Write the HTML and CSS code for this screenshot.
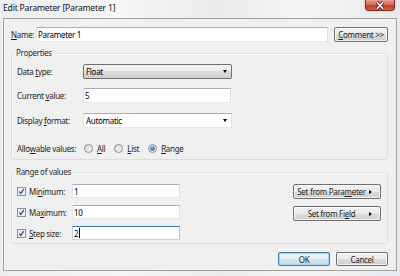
FILE: index.html
```html
<!DOCTYPE html>
<html>
<head>
<meta charset="utf-8">
<title>Edit Parameter</title>
<link rel="stylesheet" href="styles.css">
</head>
<body>
<div class="window">
  <div class="titlebar">
    <span class="title">Edit Parameter [Parameter 1]</span>
    <div class="close">
      <svg width="12" height="9" viewBox="0 0 12 9"><path d="M3 1.2 L9 7.8 M9 1.2 L3 7.8" stroke="#5a1a14" stroke-width="3.2"/><path d="M3 1.2 L9 7.8 M9 1.2 L3 7.8" stroke="#ffffff" stroke-width="1.7"/></svg>
    </div>
  </div>
  <div class="client">
    <div class="name-row">
      <span class="name-label"><u>N</u>ame:</span>
      <div class="textbox name-box">Parameter 1</div>
      <button class="btn comment-btn"><u>C</u>omment &gt;&gt;</button>
    </div>

    <fieldset class="group props">
      <legend>Properties</legend>
      <div class="row">
        <span class="lbl">Data <u>t</u>ype:</span>
        <div class="combo combo-list">Float<span class="down"></span></div>
      </div>
      <div class="row row-cur">
        <span class="lbl">Current <u>v</u>alue:</span>
        <div class="textbox cur-box">5</div>
      </div>
      <div class="row row-fmt">
        <span class="lbl">Display <u>f</u>ormat:</span>
        <div class="combo combo-edit">Automatic<span class="down"></span></div>
      </div>
      <div class="row row-radio">
        <span class="lbl">Allo<u>w</u>able values:</span>
        <div class="radios">
          <span class="radio-item"><svg class="radio" width="9" height="9" viewBox="0 0 9 9"><defs><linearGradient id="rg" x1="0" y1="0" x2="1" y2="1"><stop offset="0" stop-color="#d6d6d6"/><stop offset="1" stop-color="#fbfbfb"/></linearGradient></defs><circle cx="4.5" cy="4.5" r="4" fill="url(#rg)" stroke="#8e8f8f" stroke-width="1"/></svg><span><u>A</u>ll</span></span>
          <span class="radio-item"><svg class="radio" width="9" height="9" viewBox="0 0 9 9"><circle cx="4.5" cy="4.5" r="4" fill="url(#rg)" stroke="#8e8f8f" stroke-width="1"/></svg><span><u>L</u>ist</span></span>
          <span class="radio-item"><svg class="radio" width="9" height="9" viewBox="0 0 9 9"><defs><radialGradient id="dot" cx="0.4" cy="0.35" r="0.7"><stop offset="0" stop-color="#8ad0f7"/><stop offset="0.6" stop-color="#2a77b8"/><stop offset="1" stop-color="#174e86"/></radialGradient></defs><circle cx="4.5" cy="4.5" r="4" fill="url(#rg)" stroke="#8e8f8f" stroke-width="1"/><circle cx="4.5" cy="4.5" r="2.3" fill="url(#dot)"/></svg><span><u>R</u>ange</span></span>
        </div>
      </div>
    </fieldset>

    <fieldset class="group range">
      <legend>Range of values</legend>
      <div class="range-body">
        <div class="range-left">
          <div class="crow">
            <span class="chk-lbl"><svg class="chk" width="9" height="9" viewBox="0 0 9 9"><rect x="0.5" y="0.5" width="8" height="8" fill="#f4f4f4" stroke="#8e8f8f"/><rect x="1.5" y="1.5" width="6" height="6" fill="#e9eef3"/><path d="M2.3 4.6 L3.8 6.4 L6.8 2.1" fill="none" stroke="#2c4a8c" stroke-width="1.2"/></svg>Mi<u>n</u>imum:</span>
            <div class="textbox num-box">1</div>
          </div>
          <div class="crow">
            <span class="chk-lbl"><svg class="chk" width="9" height="9" viewBox="0 0 9 9"><rect x="0.5" y="0.5" width="8" height="8" fill="#f4f4f4" stroke="#8e8f8f"/><rect x="1.5" y="1.5" width="6" height="6" fill="#e9eef3"/><path d="M2.3 4.6 L3.8 6.4 L6.8 2.1" fill="none" stroke="#2c4a8c" stroke-width="1.2"/></svg>Ma<u>x</u>imum:</span>
            <div class="textbox num-box">10</div>
          </div>
          <div class="crow">
            <span class="chk-lbl"><svg class="chk" width="9" height="9" viewBox="0 0 9 9"><rect x="0.5" y="0.5" width="8" height="8" fill="#f4f4f4" stroke="#8e8f8f"/><rect x="1.5" y="1.5" width="6" height="6" fill="#e9eef3"/><path d="M2.3 4.6 L3.8 6.4 L6.8 2.1" fill="none" stroke="#2c4a8c" stroke-width="1.2"/></svg><u>S</u>tep size:</span>
            <div class="textbox num-box focus">2<span class="caret"></span></div>
          </div>
        </div>
        <div class="range-right">
          <button class="btn set-btn"><span class="set-text">Set from Para<u>m</u>eter</span><span class="right-arrow"></span></button>
          <button class="btn set-btn"><span class="set-text">Set from Fi<u>e</u>ld</span><span class="right-arrow"></span></button>
        </div>
      </div>
    </fieldset>

    <div class="footer">
      <button class="btn ok-btn">OK</button>
      <button class="btn cancel-btn">Cancel</button>
    </div>
  </div>
</div>
</body>
</html>
```

FILE: styles.css
```css
* { box-sizing: border-box; }
html, body { margin: 0; padding: 0; }
body {
  width: 400px;
  height: 276px;
  overflow: hidden;
  font-family: "Noto Sans", "Open Sans", sans-serif;
  font-size: 8px;
  letter-spacing: -0.3px;
  white-space: nowrap;
  color: #1e1e1e;
  background: #e6e9ec;
}
u { text-decoration: underline; text-underline-offset: 1px; }

.window {
  width: 400px;
  height: 276px;
  display: flex;
  flex-direction: column;
  background: linear-gradient(to right, #eceeef 0%, #f6f6f7 30%, #e9ebec 55%, #f4f5f6 75%, #e7eaec 100%);
}
.titlebar {
  height: 18px;
  flex: none;
  display: flex;
  justify-content: space-between;
  align-items: flex-start;
}
.title {
  font-size: 8.6px;
  letter-spacing: -0.2px;
  line-height: 17px;
  padding-left: 3px;
  color: #111;
}
.close {
  width: 30px;
  height: 11px;
  margin-right: 5px;
  border: 1px solid #7c2f28;
  border-top: none;
  border-radius: 0 0 4px 4px;
  background: linear-gradient(#e9a092 0%, #d4685a 45%, #c2402f 55%, #d45c44 100%);
  box-shadow: 0 0 3px rgba(200, 80, 60, 0.4);
  display: flex;
  align-items: center;
  justify-content: center;
}

.client {
  margin: 0 3px;
  height: 253px;
  border: 1px solid #9ea3a8;
  background: #f0f0f0;
  padding: 8px 8px 0 7px;
  display: flex;
  flex-direction: column;
}

.name-row {
  display: flex;
  align-items: center;
  height: 15px;
}
.name-label { width: 25px; flex: none; }

.textbox {
  background: #fff;
  border: 1px solid;
  border-color: #abadb3 #dbdfe6 #e3e9ef #e2e3ea;
  height: 15px;
  padding-left: 1px;
  line-height: 13px;
  color: #000;
  display: flex;
  align-items: center;
  flex: none;
}
.name-box { width: 292px; }
.cur-box { width: 148px; }
.num-box { width: 108px; height: 14px; }
.num-box.focus { border-color: #3d7bad #a4c9e3 #b7d9ed #b5cfe7; }
.caret { width: 1px; height: 10px; background: #000; margin-left: 0.5px; }

.btn {
  font-family: inherit;
  font-size: 8px;
  letter-spacing: -0.3px;
  white-space: nowrap;
  color: #1e1e1e;
  height: 15px;
  padding: 0;
  border: 1px solid #707070;
  border-radius: 2px;
  background: linear-gradient(#f2f2f2 0%, #ebebeb 50%, #dddddd 50%, #cfcfcf 100%);
  box-shadow: inset 0 0 0 1px rgba(255,255,255,0.7);
  line-height: 13px;
  flex: none;
}
.comment-btn { width: 54px; margin-left: 6px; }

.group {
  margin: 0;
  border: 1px solid #d5dfe5;
  border-radius: 3px;
  min-width: 0;
  box-shadow: inset 1px 1px 0 #fafbfc;
}
.group legend {
  padding: 0 2px;
  margin-left: -3px;
  line-height: 12px;
  color: #2a2a2a;
}
.props {
  margin-top: 5px;
  padding: 5px 5px 3px 5px;
}
.row {
  display: flex;
  align-items: center;
  height: 15px;
}
.row-cur { margin-top: 9px; }
.row-fmt { margin-top: 10px; }
.row-radio { margin-top: 13px; }
.lbl { width: 66px; flex: none; }

.combo {
  width: 149px;
  height: 15px;
  border: 1px solid #707070;
  border-radius: 2px;
  display: flex;
  align-items: center;
  justify-content: space-between;
  padding: 0 4px 0 2px;
  color: #000;
  flex: none;
}
.combo-list {
  background: linear-gradient(#f2f2f2 0%, #ebebeb 50%, #dddddd 50%, #cfcfcf 100%);
}
.combo-edit {
  background: #fff;
  border-color: #abadb3 #dbdfe6 #e3e9ef #e2e3ea;
  border-radius: 0;
}
.down {
  width: 0; height: 0;
  border-left: 2.5px solid transparent;
  border-right: 2.5px solid transparent;
  border-top: 3px solid #000;
}

.radios { display: flex; align-items: center; margin-left: 1px; }
.radio-item { display: flex; align-items: center; }
.radio-item + .radio-item { margin-left: 9px; }
.radio { margin-right: 4px; flex: none; }

.range {
  margin-top: 6px;
  padding: 6px 6px 3px 5px;
}
.range-body {
  display: flex;
  justify-content: space-between;
}
.range-left { display: flex; flex-direction: column; gap: 7px; }
.crow { display: flex; align-items: center; height: 14px; }
.chk-lbl { width: 55px; display: flex; align-items: center; flex: none; }
.chk { margin-right: 3px; flex: none; }

.range-right { display: flex; flex-direction: column; gap: 7px; }
.set-btn {
  width: 88px;
  height: 15px;
  display: flex;
  align-items: center;
}
.set-text { flex: 1; text-align: center; }
.right-arrow {
  width: 0; height: 0;
  margin-right: 8px;
  border-top: 2.5px solid transparent;
  border-bottom: 2.5px solid transparent;
  border-left: 3px solid #000;
}

.footer {
  margin-top: 8px;
  display: flex;
  justify-content: flex-end;
  gap: 6px;
}
.ok-btn, .cancel-btn { width: 52px; height: 14px; }
.ok-btn {
  border-color: #3c7fb1;
  background: linear-gradient(#eef5fa 0%, #e3edf5 50%, #d5e3ee 50%, #c9dbe8 100%);
  box-shadow: inset 0 0 0 1px #a9d4f0;
}
```
